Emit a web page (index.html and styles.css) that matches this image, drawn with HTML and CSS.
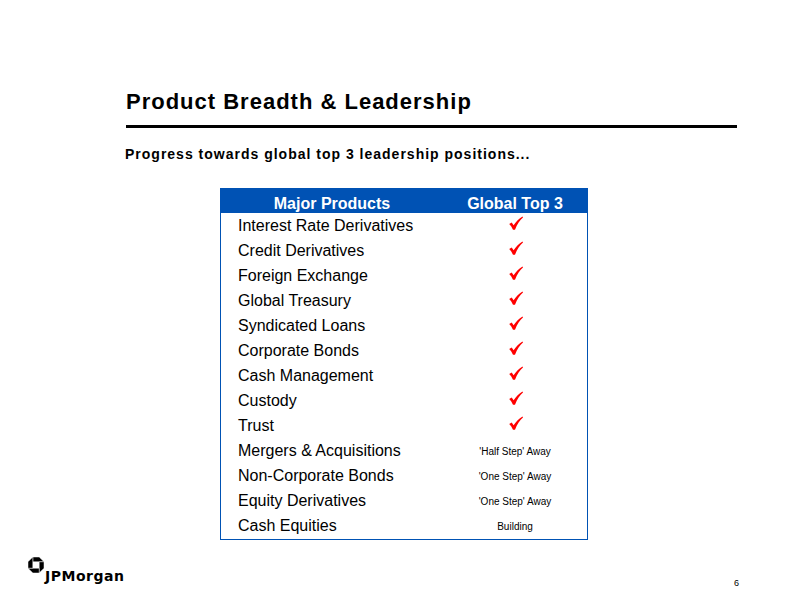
FILE: index.html
```html
<!DOCTYPE html>
<html>
<head>
<meta charset="utf-8">
<title>Product Breadth &amp; Leadership</title>
<link rel="stylesheet" href="styles.css">
</head>
<body>
<div class="slide">
  <header class="head">
    <h1 class="title">Product Breadth &amp; Leadership</h1>
    <div class="rule"></div>
    <p class="subtitle">Progress towards global top 3 leadership positions...</p>
  </header>

  <div class="table">
    <div class="th">Major Products</div><div class="th">Global Top 3</div>

    <div class="c1">Interest Rate Derivatives</div><div class="c2 chk"><svg class="check" viewBox="0 0 14 14"><path d="M0.2 8 L2.7 6.6 L4.6 9.3 C7 5.8 10 2.5 13.5 0.5 L14 1.4 C10.8 4 8.2 8 6 13.7 L4 13.7 C3 11.6 1.7 9.5 0.2 8 Z"/></svg></div>
    <div class="c1">Credit Derivatives</div><div class="c2 chk"><svg class="check" viewBox="0 0 14 14"><path d="M0.2 8 L2.7 6.6 L4.6 9.3 C7 5.8 10 2.5 13.5 0.5 L14 1.4 C10.8 4 8.2 8 6 13.7 L4 13.7 C3 11.6 1.7 9.5 0.2 8 Z"/></svg></div>
    <div class="c1">Foreign Exchange</div><div class="c2 chk"><svg class="check" viewBox="0 0 14 14"><path d="M0.2 8 L2.7 6.6 L4.6 9.3 C7 5.8 10 2.5 13.5 0.5 L14 1.4 C10.8 4 8.2 8 6 13.7 L4 13.7 C3 11.6 1.7 9.5 0.2 8 Z"/></svg></div>
    <div class="c1">Global Treasury</div><div class="c2 chk"><svg class="check" viewBox="0 0 14 14"><path d="M0.2 8 L2.7 6.6 L4.6 9.3 C7 5.8 10 2.5 13.5 0.5 L14 1.4 C10.8 4 8.2 8 6 13.7 L4 13.7 C3 11.6 1.7 9.5 0.2 8 Z"/></svg></div>
    <div class="c1">Syndicated Loans</div><div class="c2 chk"><svg class="check" viewBox="0 0 14 14"><path d="M0.2 8 L2.7 6.6 L4.6 9.3 C7 5.8 10 2.5 13.5 0.5 L14 1.4 C10.8 4 8.2 8 6 13.7 L4 13.7 C3 11.6 1.7 9.5 0.2 8 Z"/></svg></div>
    <div class="c1">Corporate Bonds</div><div class="c2 chk"><svg class="check" viewBox="0 0 14 14"><path d="M0.2 8 L2.7 6.6 L4.6 9.3 C7 5.8 10 2.5 13.5 0.5 L14 1.4 C10.8 4 8.2 8 6 13.7 L4 13.7 C3 11.6 1.7 9.5 0.2 8 Z"/></svg></div>
    <div class="c1">Cash Management</div><div class="c2 chk"><svg class="check" viewBox="0 0 14 14"><path d="M0.2 8 L2.7 6.6 L4.6 9.3 C7 5.8 10 2.5 13.5 0.5 L14 1.4 C10.8 4 8.2 8 6 13.7 L4 13.7 C3 11.6 1.7 9.5 0.2 8 Z"/></svg></div>
    <div class="c1">Custody</div><div class="c2 chk"><svg class="check" viewBox="0 0 14 14"><path d="M0.2 8 L2.7 6.6 L4.6 9.3 C7 5.8 10 2.5 13.5 0.5 L14 1.4 C10.8 4 8.2 8 6 13.7 L4 13.7 C3 11.6 1.7 9.5 0.2 8 Z"/></svg></div>
    <div class="c1">Trust</div><div class="c2 chk"><svg class="check" viewBox="0 0 14 14"><path d="M0.2 8 L2.7 6.6 L4.6 9.3 C7 5.8 10 2.5 13.5 0.5 L14 1.4 C10.8 4 8.2 8 6 13.7 L4 13.7 C3 11.6 1.7 9.5 0.2 8 Z"/></svg></div>
    <div class="c1">Mergers &amp; Acquisitions</div><div class="c2 note">'Half Step' Away</div>
    <div class="c1">Non-Corporate Bonds</div><div class="c2 note">'One Step' Away</div>
    <div class="c1">Equity Derivatives</div><div class="c2 note">'One Step' Away</div>
    <div class="c1">Cash Equities</div><div class="c2 note">Building</div>
  </div>

  <footer class="foot">
    <div class="brand">
      <svg class="logo" viewBox="0 0 100 100">
        <polygon points="30,0 70,0 100,30 30,30"/>
        <polygon points="100,30 100,70 70,100 70,30"/>
        <polygon points="70,100 30,100 0,70 70,70"/>
        <polygon points="0,70 0,30 30,0 30,70"/>
      </svg>
      <span class="brand-name">JPMorgan</span>
    </div>
    <span class="page-no">6</span>
  </footer>
</div>
</body>
</html>
```

FILE: styles.css
```css
html, body {
  margin: 0;
  padding: 0;
  background: #ffffff;
}

.slide {
  width: 792px;
  height: 612px;
  overflow: hidden;
  display: flex;
  flex-direction: column;
  font-family: "Liberation Sans", Arial, sans-serif;
  color: #000000;
}

.head {
  padding: 89px 55px 0 126px;
}

.title {
  margin: 0;
  font-size: 22px;
  line-height: 26px;
  font-weight: bold;
  letter-spacing: 1px;
}

.rule {
  margin-top: 10px;
  height: 3px;
  background: #000000;
}

.subtitle {
  margin: 17px 0 0 -1px;
  font-size: 14px;
  line-height: 18px;
  font-weight: bold;
  letter-spacing: 1px;
}

.table {
  margin: 25px 0 0 220px;
  width: 368px;
  box-sizing: border-box;
  border: 1px solid #0052b4;
  display: grid;
  grid-template-columns: 222px 1fr;
  grid-auto-rows: 25px;
}

.th {
  height: 24px;
  box-sizing: border-box;
  padding-top: 5px;
  line-height: 19px;
  background: #0052b4;
  color: #ffffff;
  font-size: 16px;
  font-weight: bold;
  text-align: center;
}

.c1 {
  padding-left: 17px;
  font-size: 16px;
  line-height: 23px;
  white-space: nowrap;
}

.c2 {
  text-align: center;
}

.chk {
  display: flex;
  justify-content: center;
  padding-top: 2px;
  padding-left: 1px;
}

.check {
  width: 14px;
  height: 14px;
  fill: #ff0000;
}

.note {
  font-size: 10px;
  line-height: 25px;
}

.foot {
  margin-top: 17px;
  padding: 0 53px 0 28px;
  display: flex;
  justify-content: space-between;
  align-items: flex-start;
}

.brand {
  display: flex;
  align-items: flex-start;
}

.logo {
  width: 16px;
  height: 16px;
  fill: #000000;
  stroke: #ffffff;
  stroke-width: 3;
}

.brand-name {
  margin: 11px 0 0 1px;
  font-family: "DejaVu Sans", sans-serif;
  font-size: 14px;
  line-height: 16px;
  font-weight: bold;
  letter-spacing: 0.5px;
}

.page-no {
  margin-top: 21px;
  font-size: 9px;
  line-height: 11px;
}
```
